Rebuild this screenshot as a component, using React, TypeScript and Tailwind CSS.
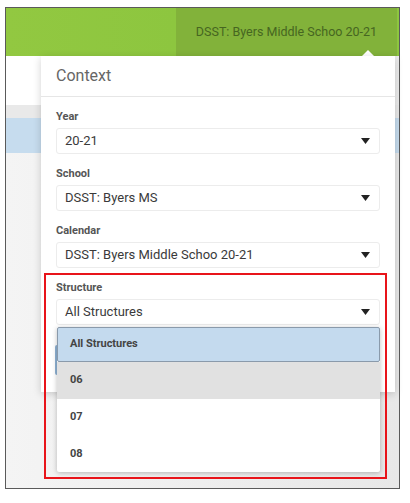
import React from "react";

const Caret = () => (
  <svg width="9" height="6" viewBox="0 0 9 6" className="shrink-0">
    <path d="M0 0 H9 L4.5 6 Z" fill="#222" />
  </svg>
);

function Field({ label, value }: { label: string; value: string }) {
  return (
    <div className="flex flex-col">
      <div className="text-[11px] leading-[12px] font-bold text-[#555]">{label}</div>
      <div className="mt-[5px] h-[26px] flex items-center justify-between rounded-[3px] border border-[#ececec] pl-[8px] pr-[9px] text-[13px] text-[#3a3a3a]">
        <span>{value}</span>
        <Caret />
      </div>
    </div>
  );
}

export default function App() {
  return (
    <div
      className="w-[410px] h-[503px] bg-white relative overflow-hidden"
      style={{ fontFamily: "Roboto, 'Liberation Sans', sans-serif" }}
    >
      {/* frame */}
      <div className="absolute left-[5px] top-[7px] w-[395px] h-[482px] border border-[#5a5a5a] bg-[#efefef] flex flex-col overflow-hidden">
        <div className="h-[48px] flex shrink-0">
          <div className="w-[170px] bg-gradient-to-r from-[#92c841] to-[#8dc63f]" />
          <div className="flex-1 bg-[#82b23a] flex items-center justify-center text-[12.5px] text-[#466621]">
            DSST: Byers Middle Schoo 20-21
          </div>
          <div className="w-[2px] bg-[#8dc63f]" />
        </div>
        <div className="h-[49px] bg-gradient-to-r from-white via-white to-[#ececec] shrink-0" />
        <div className="h-[13px] bg-[#e9e9e9] shrink-0" />
        <div className="h-[35px] bg-[#c6dcee] shrink-0" />
        <div className="flex-1 bg-gradient-to-r from-[#f4f4f4] to-[#e8e8e8]" />
      </div>

      {/* caret of popover */}
      <div className="absolute left-[361px] top-[50px] w-0 h-0 border-l-[7px] border-r-[7px] border-b-[7px] border-l-transparent border-r-transparent border-b-white" />

      {/* popover panel */}
      <div className="absolute left-[41px] top-[56px] w-[354px] h-[336px] bg-white shadow-[0_2px_8px_rgba(0,0,0,0.18)] flex flex-col">
        <div className="h-[41px] flex items-center px-[15px] text-[16px] text-[#666] border-b border-[#e6e6e6] shrink-0">
          Context
        </div>
        <div className="flex flex-col gap-[14px] pl-[15px] pr-[15px] pt-[14px]">
          <Field label="Year" value="20-21" />
          <Field label="School" value="DSST: Byers MS" />
          <Field label="Calendar" value="DSST: Byers Middle Schoo 20-21" />
          <Field label="Structure" value="All Structures" />
        </div>
        <div className="ml-[14px] mt-[20px] w-[90px] h-[30px] bg-[#8fb2d4] rounded-[2px]" />
      </div>

      {/* dropdown list */}
      <div className="absolute left-[57px] top-[327px] w-[323px] h-[145px] bg-white rounded-[2px] shadow-[0_1px_5px_rgba(0,0,0,0.25)] flex flex-col text-[11px] font-bold text-[#444]">
        <div className="h-[35px] flex items-center pl-[12px] bg-[#c4daee] border border-[#8a9aab] rounded-[2px]">
          All Structures
        </div>
        <div className="h-[37px] flex items-center pl-[13px] bg-[#e1e1e1]">06</div>
        <div className="h-[37px] flex items-center pl-[13px]">07</div>
        <div className="h-[36px] flex items-center pl-[13px]">08</div>
      </div>

      {/* red highlight */}
      <div className="absolute left-[44px] top-[273px] w-[343px] h-[206px] border-2 border-[#e8141a]" />
    </div>
  );
}
